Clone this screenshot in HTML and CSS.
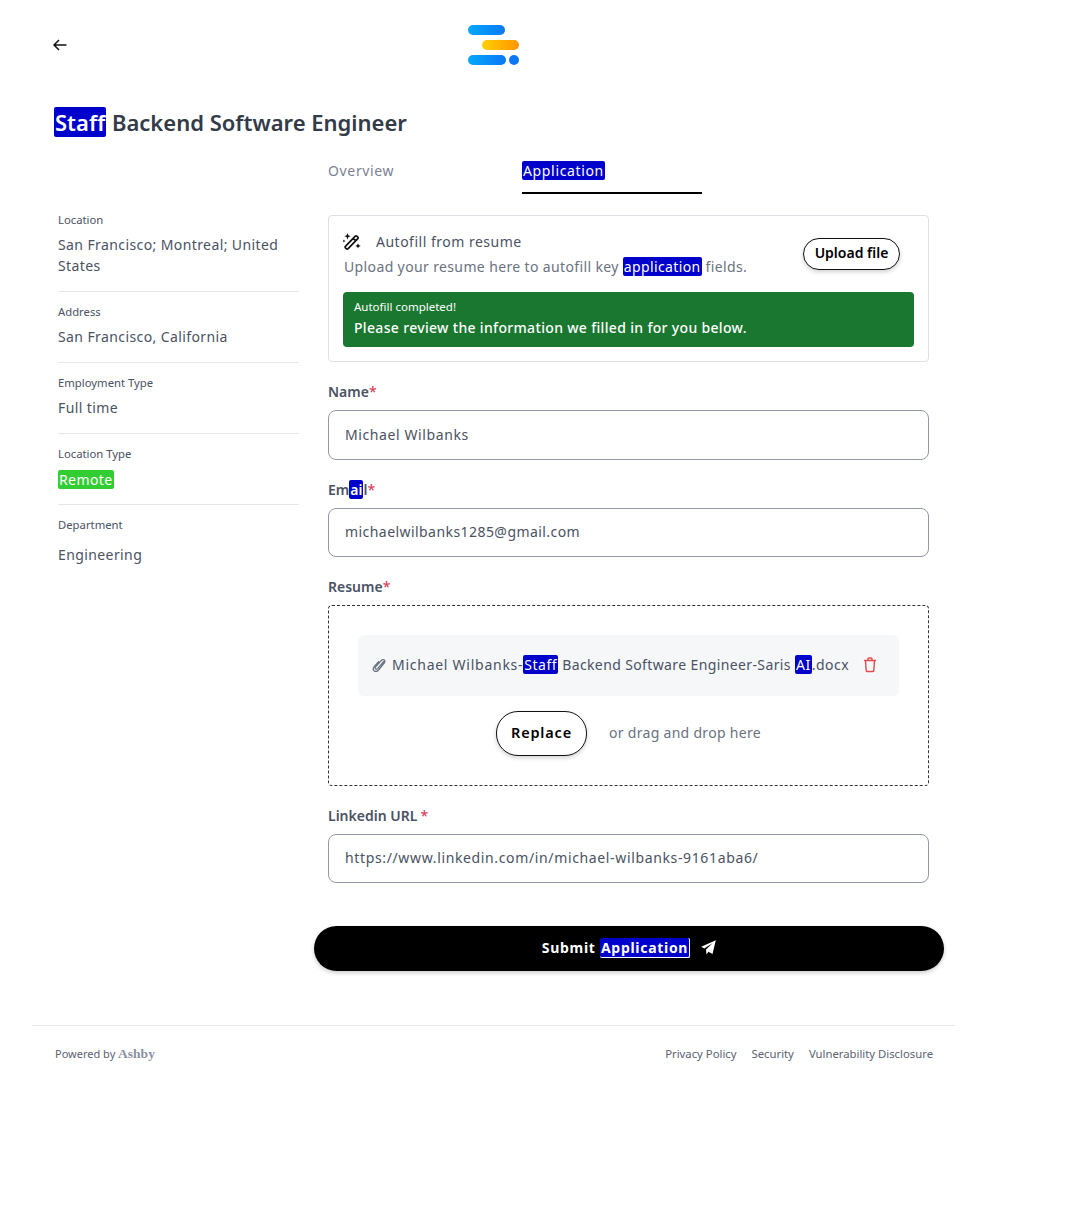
FILE: index.html
```html
<!DOCTYPE html>
<html lang="en">
<head>
<meta charset="utf-8">
<title>Staff Backend Software Engineer</title>
<link rel="stylesheet" href="styles.css">
</head>
<body>
<div class="page">
  <header class="top">
    <a class="back" href="#" aria-label="Back">
      <svg width="14" height="12" viewBox="0 0 14 12" fill="none" stroke="#111" stroke-width="1.5"><path d="M13.500 6H1.200M6 1 1 6l5 5"/></svg>
    </a>
    <svg class="logo" width="52" height="40" viewBox="0 0 52 40">
      <defs>
        <linearGradient id="lb" x1="0" x2="1" y1="0" y2="0"><stop offset="0" stop-color="#03a9fb"/><stop offset="1" stop-color="#0a78f5"/></linearGradient>
        <linearGradient id="ly" x1="0" x2="1" y1="0" y2="0"><stop offset="0" stop-color="#ffcf00"/><stop offset="1" stop-color="#ff9500"/></linearGradient>
      </defs>
      <rect x="0" y="0" width="37" height="10" rx="5" fill="url(#lb)"/>
      <rect x="14" y="15" width="37" height="10" rx="5" fill="url(#ly)"/>
      <rect x="0" y="30" width="38" height="10" rx="5" fill="url(#lb)"/>
      <circle cx="46" cy="35" r="5" fill="#0a78f5"/>
    </svg>
  </header>
  <h1 class="title"><mark>Staff</mark> Backend Software Engineer</h1>
  <div class="columns">
    <aside class="side">
      <div class="item"><div class="k">Location</div><div class="v">San Francisco; Montreal; United States</div></div>
      <div class="item"><div class="k">Address</div><div class="v">San Francisco, California</div></div>
      <div class="item"><div class="k">Employment Type</div><div class="v">Full time</div></div>
      <div class="item badge"><div class="k">Location Type</div><div class="v"><mark class="green">Remote</mark></div></div>
      <div class="item last"><div class="k">Department</div><div class="v">Engineering</div></div>
    </aside>
    <main class="main">
      <nav class="tabs">
        <a class="tab" href="#">Overview</a>
        <a class="tab active" href="#"><mark>Application</mark></a>
      </nav>
      <section class="card">
        <div class="card-head">
          <div class="card-text">
            <div class="card-title">
              <svg width="18" height="18" viewBox="0 0 18 18" fill="none" stroke="#111" stroke-width="1.7"><path d="M2.400 13.300 12.300 3.200a1 1 0 0 1 1.500 0l1 1a1 1 0 0 1 0 1.500L4.900 15.800a1 1 0 0 1-1.500 0l-1-1a1 1 0 0 1 0-1.500ZM10.300 5.300l2.500 2.500"/><path fill="#111" stroke="none" d="M4.500 0l.9 2.300 2.300.9-2.300.9-.9 2.300-.9-2.300-2.300-.9 2.300-.9ZM15 10.200l.8 1.900 1.900.8-1.900.8-.8 1.900-.8-1.900-1.900-.8 1.900-.8ZM.9 6.500l.5 1 1 .5-1 .5-.5 1-.5-1-1-.5 1-.5Z"/></svg>
              <span>Autofill from resume</span>
            </div>
            <div class="card-desc">Upload your resume here to autofill key <mark>application</mark> fields.</div>
          </div>
          <button class="btn upload" type="button">Upload file</button>
        </div>
        <div class="notice">
          <div class="notice-a">Autofill completed!</div>
          <div class="notice-b">Please review the information we filled in for you below.</div>
        </div>
      </section>
      <div class="field">
        <label class="lab">Name<span class="req">*</span></label>
        <div class="input tall">Michael Wilbanks</div>
      </div>
      <div class="field">
        <label class="lab">Em<mark>ai</mark>l<span class="req">*</span></label>
        <div class="input email">michaelwilbanks1285@gmail.com</div>
      </div>
      <div class="field">
        <label class="lab">Resume<span class="req">*</span></label>
        <div class="drop">
          <div class="file">
            <svg width="14" height="14" viewBox="0 0 14 14" fill="none" stroke="#6b7280" stroke-width="1.3"><path d="M12 3.200 5.600 10.600c-.6.7-1.500.7-2 .2-.6-.5-.6-1.300 0-2l5.600-6.200c1-1.100 2.300-1.200 3.100-.5.8.7.8 2-.2 3.100L6.600 12c-1.500 1.600-3.400 1.700-4.500.7-1.100-1-1.100-2.700.3-4.300L7 3.200"/></svg>
            <span class="fname"><span class="wide">Michael Wilbanks-</span><mark>Staff</mark> <span class="narrow">Backend Software Engineer-Saris</span> <mark>AI</mark>.docx</span>
            <svg class="trash" width="14" height="16" viewBox="0 0 14 16" fill="none" stroke="#e5484d" stroke-width="1.4"><path d="M1 3.500h12M5 3.500V2a1 1 0 0 1 1-1h2a1 1 0 0 1 1 1v1.500M2.500 3.500l.7 10a1 1 0 0 0 1 1h5.600a1 1 0 0 0 1-1l.7-10"/></svg>
          </div>
          <div class="drop-actions">
            <button class="btn replace" type="button">Replace</button>
            <span class="or">or drag and drop here</span>
          </div>
        </div>
      </div>
      <div class="field">
        <label class="lab">Linkedin URL<span class="req sp">*</span></label>
        <div class="input url">https://www.linkedin.com/in/michael-wilbanks-9161aba6/</div>
      </div>
      <button class="submit" type="button">
        <span>Submit <mark>Application</mark></span>
        <svg width="15" height="15" viewBox="0 0 15 15" fill="#fff"><path d="M14.800.2 11.500 14 7.400 11.700 5.500 14.500 5 9.600 11.500 3.200 3.200 8.500.2 6.800Z"/></svg>
      </button>
    </main>
  </div>
  <footer class="foot">
    <div class="powered">Powered by <span class="ashby">Ashby</span></div>
    <div class="links"><a href="#">Privacy Policy</a><a href="#">Security</a><a href="#">Vulnerability Disclosure</a></div>
  </footer>
</div>
</body>
</html>
```
FILE: styles.css
```css
* { box-sizing: border-box; }
html, body { margin: 0; padding: 0; background: #fff; }
body {
  font-family: "Noto Sans", "Open Sans", sans-serif;
  color: #3d4452;
  height: 1206px;
  overflow: hidden;
}
a { color: inherit; text-decoration: none; }
mark {
  background: #0000cd;
  color: #fff;
  border-radius: 2px;
  padding: 0 1px;
}
mark.green { background: #32cd32; }

.page { width: 922px; margin-left: 33px; }

.top { position: relative; height: 89px; padding: 25px 0 0 20px; display: flex; }
.back { display: block; margin-top: 14px; height: 12px; line-height: 0; }
.logo { position: absolute; left: 435px; top: 25px; }

.title {
  margin: 19px 0 0 21px;
  font-size: 22px;
  line-height: 28px;
  font-weight: 600;
  color: #333a48;
}
.columns { display: flex; margin-top: 24px; padding-left: 25px; }

.side { width: 241px; margin-right: 29px; padding-top: 40px; flex: none; }
.item { padding: 12px 0 15px; border-bottom: 1px solid #e5e6e8; }
.item.last { border-bottom: 0; }
.item.last .v { margin-top: 11px; }
.item.badge .v { margin-top: 7px; margin-bottom: -1px; }
.k { font-size: 11.300px; line-height: 16px; color: #4a5263; }
.v { margin-top: 6px; font-size: 14px; line-height: 21px; color: #4a5263; letter-spacing: .4px; }

.main { width: 601px; flex: none; }
.tabs { display: flex; height: 34px; }
.tab { width: 194px; font-size: 14px; line-height: 21px; color: #7a8194; letter-spacing: .65px; }
.tab.active { width: 180px; height: 34px; border-bottom: 2px solid #000; }

.card {
  margin-top: 21px;
  height: 147px;
  border: 1px solid #dfe0e6;
  border-radius: 4px;
  padding: 14px;
}
.card-head { display: flex; justify-content: space-between; height: 62px; }
.card-title { display: flex; align-items: center; gap: 15px; font-size: 14px; line-height: 24px; color: #4a5263; letter-spacing: .5px; }
.card-desc { margin-left: 1px; font-size: 14px; line-height: 25px; color: #6b7280; letter-spacing: .37px; }
.btn {
  font-family: inherit;
  font-weight: 600;
  color: #000;
  background: #fff;
  border: 1px solid #111;
  box-shadow: 0 2px 4px rgba(0,0,0,.18);
  cursor: pointer;
  padding: 0;
}
.upload { width: 97px; height: 32px; margin: 8px 14px 0 0; padding-bottom: 2px; border-radius: 16px; font-size: 14px; line-height: 20px; }
.notice { background: #1a772f; color: #fff; border-radius: 4px; height: 55px; padding: 7px 11px; }
.notice-a { font-size: 11.500px; line-height: 16px; }
.notice-b { margin-top: 2px; font-size: 14px; line-height: 21px; font-weight: 500; letter-spacing: .33px; }

.field { margin-top: 21px; }
.lab { display: block; font-size: 14px; line-height: 18px; font-weight: 600; color: #4a5263; margin-bottom: 9px; }
.req { color: #d9304f; font-weight: 400; }
.req.sp { margin-left: 3px; }
.input {
  height: 49px;
  border: 1px solid #9398a8;
  border-radius: 8px;
  padding: 0 16px 2px;
  display: flex;
  align-items: center;
  font-size: 14px;
  color: #4a5263;
  letter-spacing: .6px;
}
.input.tall { height: 50px; }
.input.email { letter-spacing: .44px; }
.input.url { letter-spacing: .64px; }

.drop {
  height: 181px;
  border: 1px dashed #333;
  border-radius: 4px;
  padding: 29px 29px 0;
}
.file {
  height: 61px;
  background: #f6f7f9;
  border-radius: 6px;
  display: flex;
  align-items: center;
  padding: 0 14px 2px;
  font-size: 14px;
  color: #4a5263;
  letter-spacing: .5px;
}
.fname { margin-left: 6px; white-space: nowrap; }
.wide { letter-spacing: .74px; }
.narrow { letter-spacing: .38px; }
.trash { margin-left: 14px; }
.drop-actions { display: flex; align-items: center; margin-top: 15px; padding-left: 138px; }
.replace { width: 91px; height: 45px; padding-bottom: 3px; border-radius: 22px; font-size: 14.500px; letter-spacing: .8px; }
.or { margin-left: 22px; margin-top: -3px; font-size: 14px; color: #6b7280; letter-spacing: .3px; }

.submit {
  display: flex;
  align-items: center;
  justify-content: center;
  gap: 11px;
  width: 630px;
  height: 45px;
  margin: 43px 0 0 -14px;
  padding: 0 0 2px;
  border: 0;
  border-radius: 23px;
  background: #000;
  color: #fff;
  font-family: inherit;
  font-size: 14px;
  font-weight: 700;
  letter-spacing: .7px;
  box-shadow: 0 2px 4px rgba(0,0,0,.2);
  cursor: pointer;
}
.submit mark { border-right: 1px solid #fff; border-bottom: 1px solid #fff; }

.foot {
  margin-top: 54px;
  border-top: 1px solid #e5e6e8;
  display: flex;
  justify-content: space-between;
  padding: 20px 22px 0 22px;
  font-size: 11px;
  line-height: 16px;
  color: #5b6272;
}
.ashby { font-family: "Liberation Serif", serif; font-weight: 700; font-size: 13.500px; color: #8b90a0; }
.links { display: flex; gap: 15px; font-size: 11.300px; }
```
